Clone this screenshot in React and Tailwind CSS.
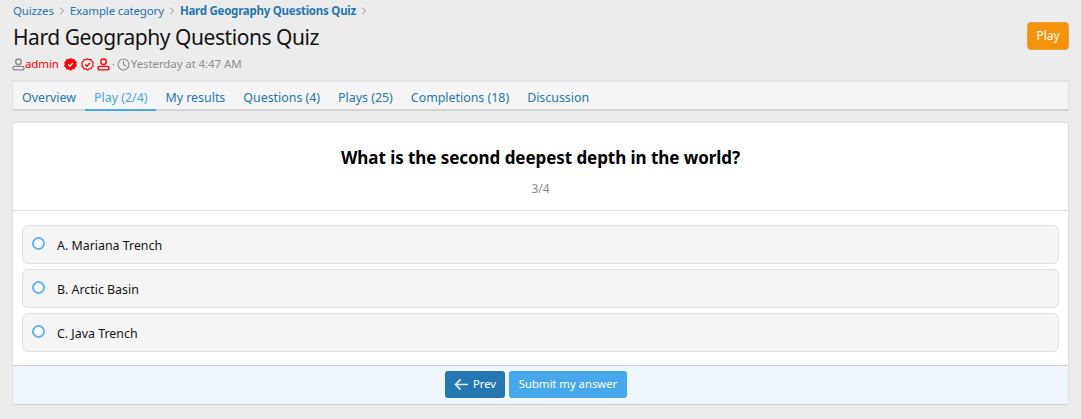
import React from 'react';
import { FiChevronRight } from 'react-icons/fi';

const tabs = ['Overview', 'Play (2/4)', 'My results', 'Questions (4)', 'Plays (25)', 'Completions (18)', 'Discussion'];
const answers = ['A. Mariana Trench', 'B. Arctic Basin', 'C. Java Trench'];

const UserIcon = ({ className }) => (
  <svg viewBox="0 0 14 14" fill="none" stroke="currentColor" strokeWidth="1.5" className={className}>
    <circle cx="7" cy="4" r="3" />
    <path d="M2.5 9h9a1.3 1.3 0 0 1 1.3 1.3v1.2a1.3 1.3 0 0 1-1.3 1.3h-9a1.3 1.3 0 0 1-1.3-1.3v-1.2A1.3 1.3 0 0 1 2.5 9z" />
  </svg>
);

const Badge = ({ solid }) => (
  <svg viewBox="0 0 14 14" className="w-[13px] h-[13px] text-[#ff0000]">
    <path
      d="M7 .8l1.7 1 2-.2.8 1.8 1.6 1.2-.5 2 .6 1.9-1.6 1.3-.8 1.8-2 0L7 13l-1.8-1.3-2 0-.8-1.8L.8 8.6l.6-1.9-.5-2 1.6-1.2.8-1.8 2 .2z"
      fill={solid ? 'currentColor' : 'none'}
      stroke="currentColor"
      strokeWidth="1.2"
    />
    <path d="M4.4 7l1.9 1.9 3.3-3.5" fill="none" stroke={solid ? '#fff' : 'currentColor'} strokeWidth="1.4" />
  </svg>
);

const App = () => {
  return (
    <div className="min-h-[419px] bg-[#ececec] px-[12px] pt-[4px] text-[13px] text-[#141414] font-['Noto_Sans',sans-serif]">
      <div className="flex justify-between">
        <div className="pl-[1px]">
          {/* Breadcrumb */}
          <div className="flex items-center h-[14px] text-[11.5px] tracking-[-0.15px] leading-[14px] text-[#2577b1]">
            <span>Quizzes</span>
            <FiChevronRight className="mx-[2px] w-[12px] h-[12px] text-[#8c8c8c]" />
            <span>Example category</span>
            <FiChevronRight className="mx-[2px] w-[12px] h-[12px] text-[#8c8c8c]" />
            <span className="font-bold tracking-[-0.25px]">Hard Geography Questions Quiz</span>
            <FiChevronRight className="mx-[2px] w-[12px] h-[12px] text-[#8c8c8c]" />
          </div>
          <h1 className="mt-[5px] text-[21px] tracking-[-0.45px] leading-[28px] whitespace-nowrap">Hard Geography Questions Quiz</h1>
          {/* Meta line */}
          <div className="mt-[5px] -ml-[1px] flex items-center h-[16px] text-[11.5px] tracking-[-0.1px] text-[#8c8c8c]">
            <UserIcon className="w-[13px] h-[13px]" />
            <span className="text-[#ff0000]">admin</span>
            <span className="flex items-center ml-[5px]">
              <Badge solid />
              <span className="ml-[4px]"><Badge /></span>
              <UserIcon className="ml-[3px] w-[13px] h-[13px] text-[#ff0000]" />
            </span>
            <span className="mx-[2px]">·</span>
            <svg viewBox="0 0 14 14" fill="none" stroke="currentColor" strokeWidth="1.2" className="w-[13px] h-[13px] mr-[1px]">
              <circle cx="7" cy="7" r="5.9" />
              <path d="M7 3.2V7l2.6 1.7" />
            </svg>
            <span>Yesterday at 4:47 AM</span>
          </div>
        </div>
        <button className="mt-[18px] w-[42px] h-[28px] self-start rounded-[4px] bg-[#f4930c] border border-[#e9a23f] text-[12px] text-white">
          Play
        </button>
      </div>

      {/* Tabs */}
      <div className="mt-[8px] flex h-[31px] bg-[#f5f5f5] border-t-2 border-t-[#e4e4e4] border-x border-x-[#e0e0e0] border-b-2 border-b-[#d4d4d4]">
        {tabs.map((tab) => (
          <div
            key={tab}
            className={`px-[9px] leading-[31px] text-[12.4px] whitespace-nowrap ${
              tab === 'Play (2/4)' ? 'h-[29px] border-b-2 border-[#47a7eb] text-[#47a7eb]' : 'text-[#2577b1]'
            }`}
          >
            {tab}
          </div>
        ))}
      </div>

      {/* Question card */}
      <div className="mt-[10px] bg-white rounded-[4px] border-t-2 border-t-[#e4e4e4] border-x border-x-[#e0e0e0] border-b border-b-[#cfcfcf]">
        <div className="h-[88px] pt-[23px] text-center border-b border-[#dfdfdf]">
          <div className="text-[17px] tracking-[-0.06px] leading-[24px] font-bold text-black">What is the second deepest depth in the world?</div>
          <div className="mt-[10px] text-[12px] leading-[18px] text-[#8c8c8c]">3/4</div>
        </div>
        <div className="flex flex-col gap-[5px] px-[9px] pt-[14px] pb-[13px]">
          {answers.map((answer) => (
            <div key={answer} className="flex items-center h-[39px] rounded-[6px] bg-[#f5f5f5] border-[1.5px] border-[#e2e2e2] pl-[8.5px]">
              <span className="mb-[2px] w-[13px] h-[13px] rounded-full bg-white border-2 border-[#64b2f0]"></span>
              <span className="ml-[12.5px] mt-[3px] text-[12.4px] text-[#141414]">{answer}</span>
            </div>
          ))}
        </div>
        <div className="flex justify-center gap-[4px] h-[39px] pt-[5px] pr-[9px] bg-[#eff6fe] border-t border-[#d0d0d0] rounded-b-[4px]">
          <button className="flex items-center justify-center w-[60px] h-[27px] rounded-[3px] bg-[#2577b1] text-[11.3px] text-white">
            <svg viewBox="0 0 16 14" fill="none" stroke="currentColor" strokeWidth="1.7" className="w-[15px] h-[13px] mr-[4px] text-[#e8f0f8]">
              <path d="M15 7H1.5M7 1.5L1.5 7 7 12.5" />
            </svg>
            Prev
          </button>
          <button className="w-[118px] h-[27px] rounded-[3px] bg-[#47a7eb] text-[11.3px] text-white">Submit my answer</button>
        </div>
      </div>
    </div>
  );
};

export default App;
